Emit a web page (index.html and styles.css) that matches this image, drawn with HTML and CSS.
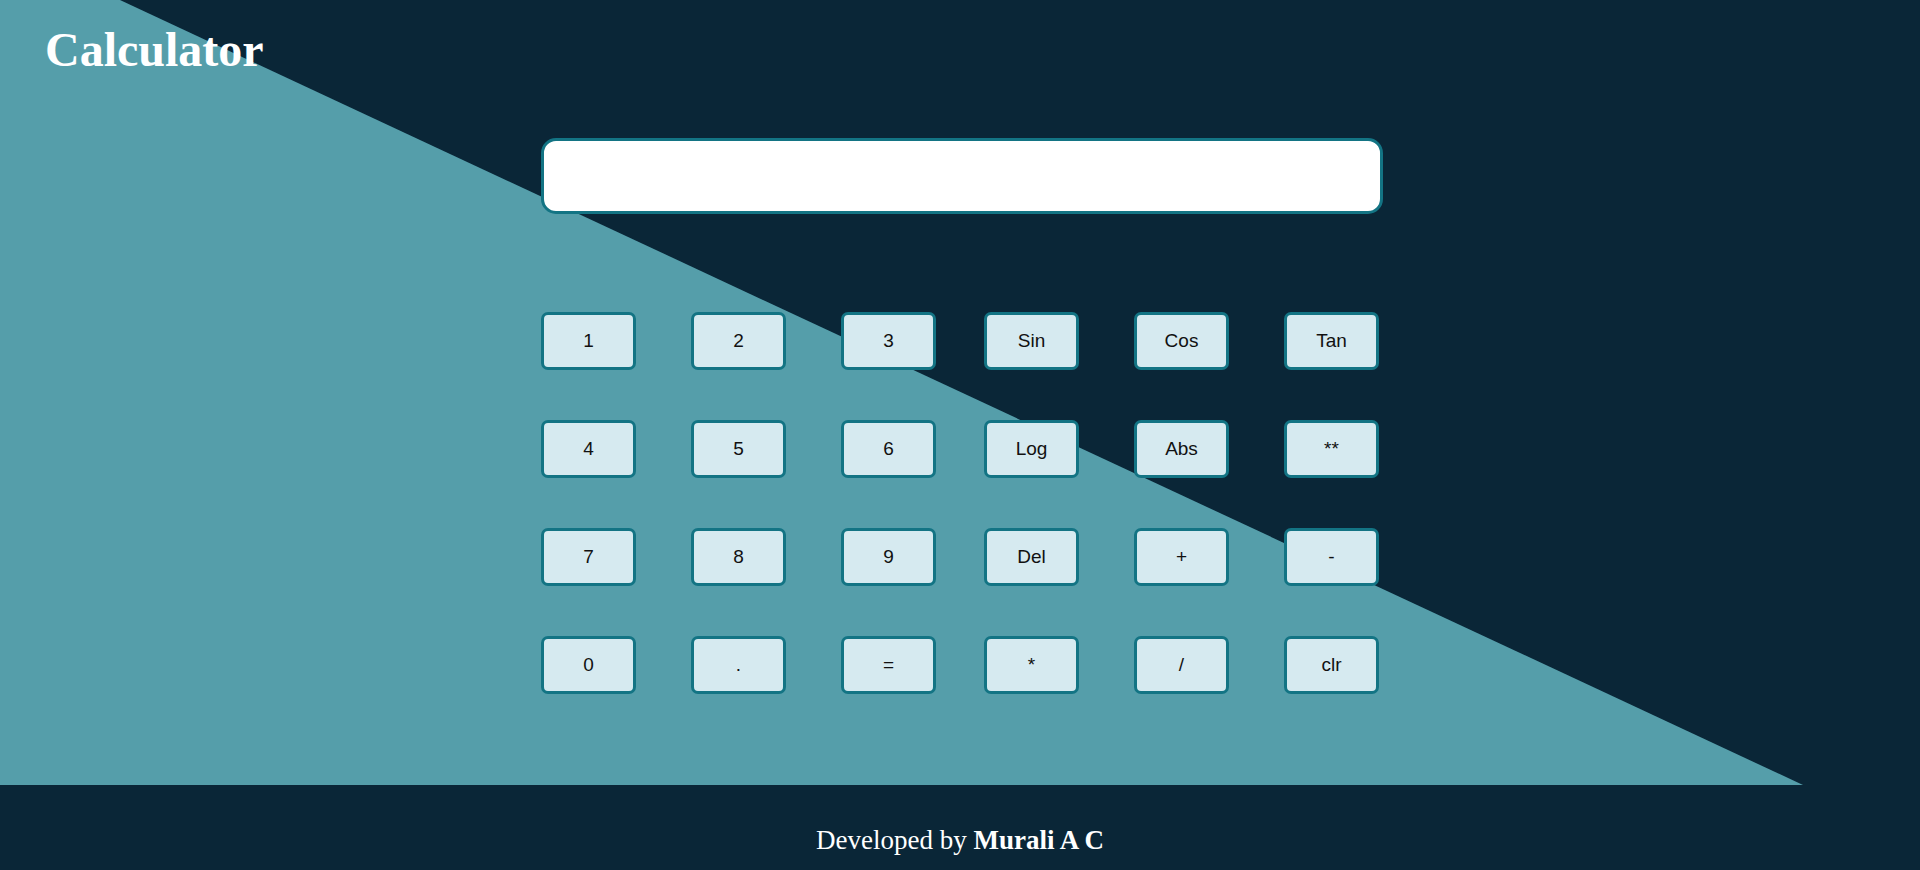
FILE: index.html
```html
<!DOCTYPE html>
<html lang="en">
<head>
<meta charset="UTF-8">
<title>Calculator</title>
<link rel="stylesheet" href="styles.css">
</head>
<body>
<main class="stage">
  <h1 class="title">Calculator</h1>
  <section class="calc">
    <input class="display" type="text" aria-label="display">
    <div class="keys">
      <button class="key">1</button>
      <button class="key">2</button>
      <button class="key">3</button>
      <button class="key">Sin</button>
      <button class="key">Cos</button>
      <button class="key">Tan</button>
      <button class="key">4</button>
      <button class="key">5</button>
      <button class="key">6</button>
      <button class="key">Log</button>
      <button class="key">Abs</button>
      <button class="key">**</button>
      <button class="key">7</button>
      <button class="key">8</button>
      <button class="key">9</button>
      <button class="key">Del</button>
      <button class="key">+</button>
      <button class="key">-</button>
      <button class="key">0</button>
      <button class="key">.</button>
      <button class="key">=</button>
      <button class="key">*</button>
      <button class="key">/</button>
      <button class="key">clr</button>
    </div>
  </section>
</main>
<footer class="footer">Developed by <b>Murali A C</b></footer>
</body>
</html>
```
FILE: styles.css
```css
html, body {
  margin: 0;
  padding: 0;
}
body {
  background: #0a2637;
  font-family: "Liberation Serif", "Times New Roman", serif;
  overflow: hidden;
}
.stage {
  position: relative;
  height: 785px;
  background: #0a2637;
  overflow: hidden;
}
.stage::before {
  content: "";
  position: absolute;
  inset: 0;
  background: #559eaa;
  clip-path: polygon(0 0, 120px 0, 1803px 100%, 0 100%);
  z-index: 0;
}
.title {
  position: relative;
  z-index: 1;
  margin: 22px 0 0 45px;
  font-size: 48px;
  font-weight: bold;
  color: #ffffff;
  line-height: 55px;
}
.calc {
  position: relative;
  z-index: 1;
  width: 842px;
  margin: 61px 0 0 541px;
  display: flex;
  flex-direction: column;
  gap: 98px;
}
.display {
  box-sizing: border-box;
  width: 842px;
  height: 76px;
  border: 3px solid #137484;
  border-radius: 15px;
  background: #ffffff;
  outline: none;
  font-size: 28px;
  padding: 0 16px;
}
.keys {
  display: grid;
  grid-template-columns: 150px 150px 143px 150px 150px 95px;
  grid-auto-rows: 58px;
  row-gap: 50px;
}
.key {
  box-sizing: border-box;
  width: 95px;
  height: 58px;
  border: 3px solid #137484;
  border-radius: 7px;
  background: #d6eaf0;
  color: #111111;
  font-family: "Liberation Sans", Arial, sans-serif;
  font-size: 19px;
  padding: 0;
  cursor: pointer;
}
.footer {
  box-sizing: border-box;
  height: 85px;
  padding-top: 40px;
  text-align: center;
  color: #ffffff;
  font-size: 27px;
  line-height: normal;
}
.footer b {
  font-weight: bold;
}
```
